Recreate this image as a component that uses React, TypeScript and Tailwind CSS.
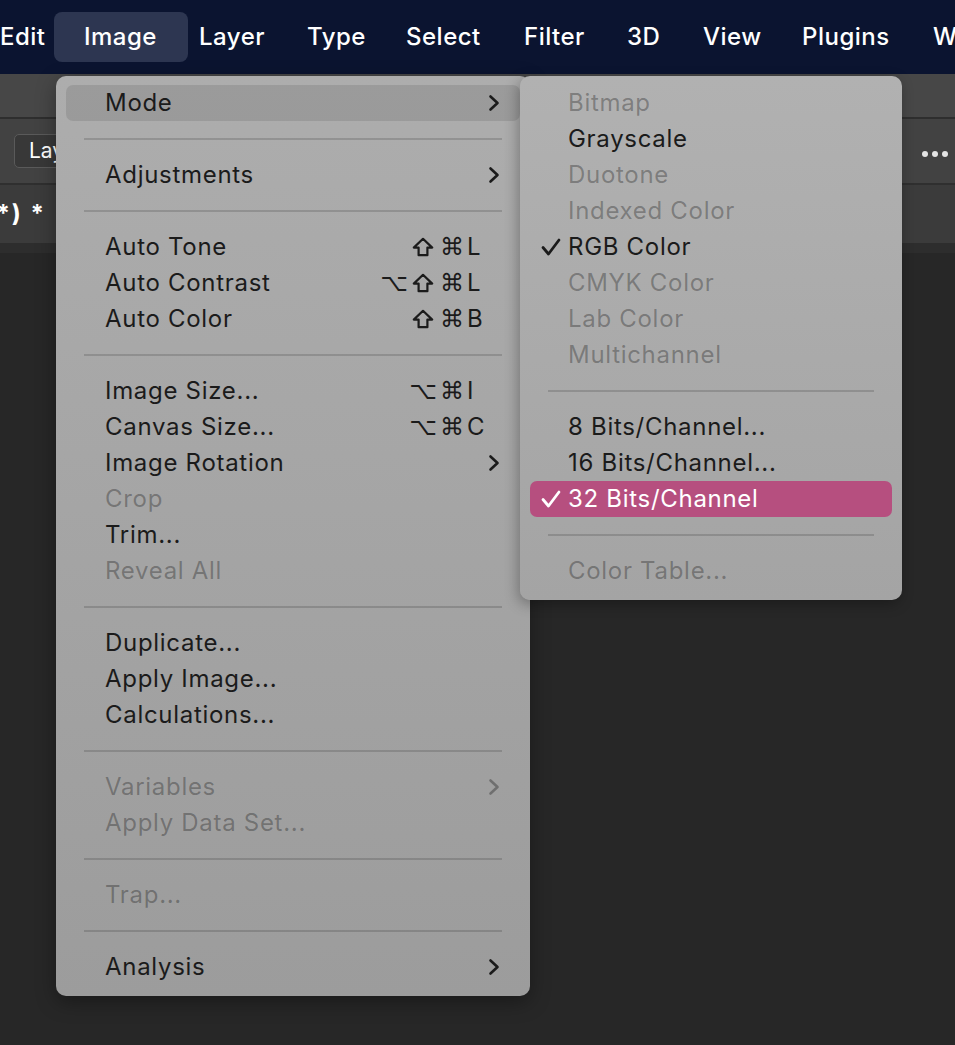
type Item =
  | { sep: true }
  | { label: string; disabled?: boolean; shortcut?: string[]; sub?: boolean; active?: boolean; checked?: boolean; selected?: boolean };

const mainItems: Item[] = [
  { label: "Mode", sub: true, active: true },
  { sep: true },
  { label: "Adjustments", sub: true },
  { sep: true },
  { label: "Auto Tone", shortcut: ["⇧", "⌘", "L"] },
  { label: "Auto Contrast", shortcut: ["⌥", "⇧", "⌘", "L"] },
  { label: "Auto Color", shortcut: ["⇧", "⌘", "B"] },
  { sep: true },
  { label: "Image Size...", shortcut: ["⌥", "⌘", "I"] },
  { label: "Canvas Size...", shortcut: ["⌥", "⌘", "C"] },
  { label: "Image Rotation", sub: true },
  { label: "Crop", disabled: true },
  { label: "Trim..." },
  { label: "Reveal All", disabled: true },
  { sep: true },
  { label: "Duplicate..." },
  { label: "Apply Image..." },
  { label: "Calculations..." },
  { sep: true },
  { label: "Variables", sub: true, disabled: true },
  { label: "Apply Data Set...", disabled: true },
  { sep: true },
  { label: "Trap...", disabled: true },
  { sep: true },
  { label: "Analysis", sub: true },
];

const modeItems: Item[] = [
  { label: "Bitmap", disabled: true },
  { label: "Grayscale" },
  { label: "Duotone", disabled: true },
  { label: "Indexed Color", disabled: true },
  { label: "RGB Color", checked: true },
  { label: "CMYK Color", disabled: true },
  { label: "Lab Color", disabled: true },
  { label: "Multichannel", disabled: true },
  { sep: true },
  { label: "8 Bits/Channel..." },
  { label: "16 Bits/Channel..." },
  { label: "32 Bits/Channel", checked: true, selected: true },
  { sep: true },
  { label: "Color Table...", disabled: true },
];

// menu bar titles with the slot width each takes in the bar
const menuBar: [string, string][] = [
  ["Edit", "w-[84px]"],
  ["Image", "w-[115px]"],
  ["Layer", "w-[108px]"],
  ["Type", "w-[99px]"],
  ["Select", "w-[118px]"],
  ["Filter", "w-[103px]"],
  ["3D", "w-[76px]"],
  ["View", "w-[99px]"],
  ["Plugins", "w-[131px]"],
  ["Window", "w-[120px]"],
];

const Chevron = ({ className }: { className?: string }) => (
  <svg width="12" height="18" viewBox="0 0 12 18" className={className}>
    <polyline points="2.5,2.5 9.5,9 2.5,15.5" fill="none" stroke="currentColor" strokeWidth="2.6" strokeLinecap="round" strokeLinejoin="round" />
  </svg>
);

const Check = ({ className }: { className?: string }) => (
  <svg width="20" height="18" viewBox="0 0 20 18" className={className}>
    <polyline points="2,9.5 7.5,16 18,2" fill="none" stroke="currentColor" strokeWidth="2.8" strokeLinecap="round" strokeLinejoin="round" />
  </svg>
);

const ShiftKey = () => (
  <svg width="22" height="20" viewBox="0 0 22 20">
    <path d="M11 1.8 L20.2 10.6 H15.4 V18.2 H6.6 V10.6 H1.8 Z" fill="none" stroke="currentColor" strokeWidth="2.2" strokeLinejoin="round" />
  </svg>
);

const Separator = () => (
  <div className="h-[36px] flex items-center px-[18px]">
    <div className="h-[2px] w-full bg-black/15" />
  </div>
);

const MenuRow = ({ item, pad }: { item: Exclude<Item, { sep: true }>; pad: string }) => {
  const color = item.selected
    ? "text-white"
    : item.disabled
      ? "text-black/30"
      : "text-[#1b1b1b]";
  return (
    <div
      className={`relative h-[36px] flex items-center rounded-[7px] ${pad} ${color} ${
        item.active ? "bg-black/10" : ""
      } ${item.selected ? "bg-[#b64f7f]" : ""}`}
    >
      {item.checked && <Check className="absolute left-[11px] top-[9px]" />}
      <span className="flex-1 whitespace-nowrap tracking-[0.7px]">{item.label}</span>
      {item.shortcut && (
        <span className="flex items-center gap-[1px] pr-[16px]">
          {item.shortcut.map((k, i) =>
            /[A-Z]/.test(k) ? (
              <span key={i} className="w-[17px] text-left text-[24px]">
                {k}
              </span>
            ) : k === "⇧" ? (
              <span key={i} className="w-[28px] flex justify-center">
                <ShiftKey />
              </span>
            ) : (
              <span key={i} className="w-[28px] text-center text-[24px] font-['DejaVu_Sans']">
                {k}
              </span>
            )
          )}
        </span>
      )}
      {item.sub && <Chevron />}
    </div>
  );
};

const App = () => {
  return (
    <div className="relative w-[955px] h-[1045px] overflow-hidden bg-[#272727] font-[Inter,'Noto_Sans',sans-serif]">
      {/* macOS menu bar */}
      <div className="h-[74px] bg-[#0b1430] flex items-center text-white text-[24px] font-medium tracking-[0.5px] whitespace-nowrap">
        {menuBar.map(([m, w]) => (
          <span key={m} className={`relative shrink-0 h-[50px] flex items-center ${w}`}>
            {m === "Image" && (
              <span className="absolute left-[-30px] top-0 w-[134px] h-[50px] rounded-[8px] bg-[#2d3651]" />
            )}
            <span className="relative">{m}</span>
          </span>
        ))}
      </div>

      {/* Photoshop chrome behind */}
      <div className="h-[45px] bg-[#474747] border-b-2 border-[#2e2e2e]" />
      <div className="h-[66px] bg-[#424242] border-b-2 border-[#2f2f2f] flex items-center justify-between px-[14px]">
        <div className="h-[34px] px-[14px] flex items-center rounded-[5px] bg-[#383838] border border-[#5a5a5a] text-white text-[21px]">
          Layer
        </div>
        <div className="flex gap-[4px] mr-[-7px] mt-[6px]">
          <span className="w-[6px] h-[6px] rounded-full bg-[#e4e4e4]" />
          <span className="w-[6px] h-[6px] rounded-full bg-[#e4e4e4]" />
          <span className="w-[6px] h-[6px] rounded-full bg-[#e4e4e4]" />
        </div>
      </div>
      <div className="h-[58px] bg-[#3b3b3b] flex items-center">
        <div className="w-[46px] overflow-hidden flex justify-end whitespace-nowrap text-white text-[24px] font-bold tracking-[2px]">
          (RGB/32*) *
        </div>
      </div>
      <div className="h-[10px] bg-[#2d2d2d]" />

      {/* Image menu */}
      <div className="absolute left-[56px] top-[76px] w-[474px] rounded-[10px] bg-gradient-to-b from-[#adadad] to-[#9c9c9c] pt-[9px] pb-[11px] px-[10px] text-[24px] shadow-[0_6px_20px_rgba(0,0,0,0.35)]">
        {mainItems.map((it, i) =>
          "sep" in it ? <Separator key={i} /> : <MenuRow key={i} item={it} pad="pl-[39px] pr-[20px]" />
        )}
      </div>

      {/* Mode submenu */}
      <div className="absolute left-[520px] top-[76px] w-[382px] rounded-[10px] bg-gradient-to-b from-[#b1b1b1] to-[#a4a4a4] pt-[9px] pb-[11px] px-[10px] text-[24px] shadow-[-2px_4px_14px_rgba(0,0,0,0.3)]">
        {modeItems.map((it, i) =>
          "sep" in it ? <Separator key={i} /> : <MenuRow key={i} item={it} pad="pl-[38px] pr-[20px]" />
        )}
      </div>
    </div>
  );
};

export default App;
